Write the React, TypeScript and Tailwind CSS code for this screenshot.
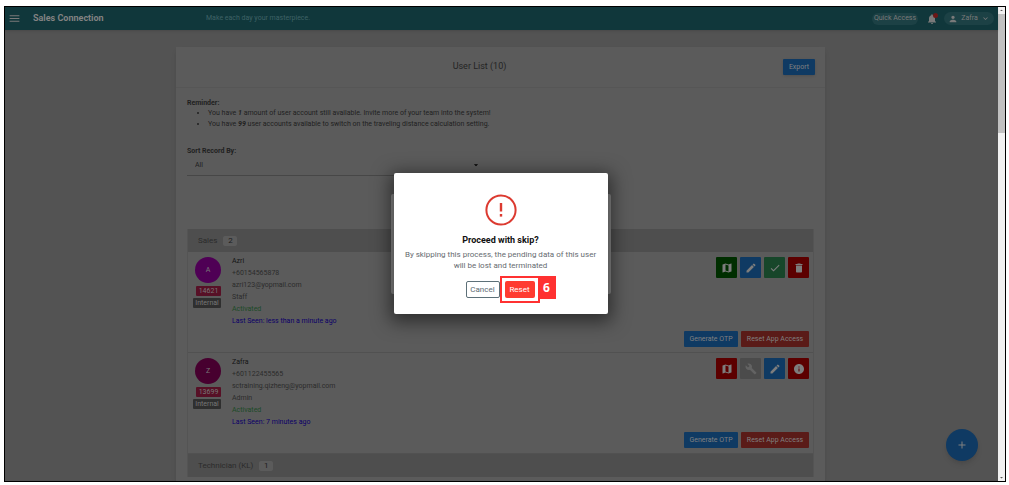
import type { ReactNode } from "react";
import {
  MdAdd,
  MdArrowDropDown,
  MdArrowDropUp,
  MdBuild,
  MdCheck,
  MdDelete,
  MdEdit,
  MdInfo,
  MdKeyboardArrowDown,
  MdMap,
  MdMenu,
  MdNotifications,
  MdPerson,
} from "react-icons/md";

type Action = { label: string; icon: ReactNode; tone: string };

type User = {
  initial: string;
  avatar: string;
  id: string;
  name: string;
  phone: string;
  email: string;
  role: string;
  lastSeen: string;
  actions: Action[];
};

const azri: User = {
  initial: "A",
  avatar: "bg-[#4f0055]",
  id: "14621",
  name: "Azri",
  phone: "+60154565878",
  email: "azri123@yopmail.com",
  role: "Staff",
  lastSeen: "Last Seen: less than a minute ago",
  actions: [
    { label: "Map", icon: <MdMap />, tone: "bg-[#002e00] text-[#7d7d7d]" },
    { label: "Edit", icon: <MdEdit />, tone: "bg-[#0f3a63] text-[#7d7d7d]" },
    { label: "Approve", icon: <MdCheck />, tone: "bg-[#17462a] text-[#7d7d7d]" },
    { label: "Delete", icon: <MdDelete />, tone: "bg-[#5c0000] text-[#7d7d7d]" },
  ],
};

const zafra: User = {
  initial: "Z",
  avatar: "bg-[#47002f]",
  id: "13699",
  name: "Zafra",
  phone: "+601122455565",
  email: "sctraining.qizheng@yopmail.com",
  role: "Admin",
  lastSeen: "Last Seen: 7 minutes ago",
  actions: [
    { label: "Map", icon: <MdMap />, tone: "bg-[#5c0000] text-[#7d7d7d]" },
    { label: "Tools", icon: <MdBuild />, tone: "bg-[#4b4b4b] text-[#636363]" },
    { label: "Edit", icon: <MdEdit />, tone: "bg-[#0f3a63] text-[#7d7d7d]" },
    { label: "Info", icon: <MdInfo />, tone: "bg-[#5c0000] text-[#7d7d7d]" },
  ],
};

function GroupHeading({ title, count }: { title: string; count: number }) {
  return (
    <h2 className="flex h-[23px] items-center gap-1.5 bg-[#4e4e4e] px-2.5 text-[8px] text-[#2b2b2b]">
      {title}
      <span className="flex h-[10px] w-[14px] items-center justify-center rounded-xs bg-[#5b5b5b] text-[#1c1c1c]">
        {count}
      </span>
    </h2>
  );
}

function UserRow({ user }: { user: User }) {
  return (
    <article className="flex h-[101px] justify-between border-b border-[#515151] py-[5px] pl-[5px] pr-1">
      <div className="flex gap-[11px]">
        <div className="flex w-7 flex-col items-end text-[7px] leading-none text-[#777]">
          <span
            className={`mb-[3px] flex size-[26px] items-center justify-center rounded-full ${user.avatar}`}
          >
            {user.initial}
          </span>
          <span className="mb-[2px] flex h-[10px] w-[25px] items-center justify-center rounded-[1px] bg-[#571026]">
            {user.id}
          </span>
          <span className="flex h-[10px] w-7 items-center justify-center rounded-[1px] bg-[#2f2f2f]">
            Internal
          </span>
        </div>
        <div className="-mt-0.5 text-[7px] leading-3 text-[#2b2b2b]">
          <h3 className="text-[#141414]">{user.name}</h3>
          <p>{user.phone}</p>
          <p>{user.email}</p>
          <p>{user.role}</p>
          <p className="text-[#1c4a27]">Activated</p>
          <p className="text-[#0c0068]">{user.lastSeen}</p>
        </div>
      </div>
      <div className="flex flex-col items-end justify-between">
        <div className="flex gap-[3px]">
          {user.actions.map((action) => (
            <button
              key={action.label}
              aria-label={action.label}
              className={`flex size-[21px] items-center justify-center rounded-[1px] text-xs ${action.tone}`}
            >
              {action.icon}
            </button>
          ))}
        </div>
        <div className="flex gap-[3px] text-[7px] leading-none text-[#808080]">
          <button className="h-4 w-[54px] whitespace-nowrap rounded-[1px] bg-[#0f3a63]">
            Generate OTP
          </button>
          <button className="h-4 w-[68px] whitespace-nowrap rounded-[1px] bg-[#5a1b18]">
            Reset App Access
          </button>
        </div>
      </div>
    </article>
  );
}

function TopBar() {
  return (
    <header className="flex h-[23px] shrink-0 items-center bg-[#10373b] pl-[3px] pr-1 text-[#7a7a7a] shadow-sm">
      <button aria-label="Open menu" className="mr-3 text-[13px]">
        <MdMenu />
      </button>
      <span className="w-[173px] text-[9px] font-bold text-[#828282]">Sales Connection</span>
      <span className="text-[7px] text-[#3f6266]">Make each day your masterpiece.</span>
      <div className="ml-auto flex items-center text-[7px] leading-none">
        <button className="h-3 w-[46px] whitespace-nowrap rounded-full bg-[#1c4145]">
          Quick Access
        </button>
        <button aria-label="Notifications" className="relative ml-2 text-xs">
          <MdNotifications />
          <span className="absolute right-0 top-0 size-[5px] rounded-full bg-[#6b1717]" />
        </button>
        <button className="ml-1.5 flex h-[13px] w-[50px] items-center justify-between rounded-full bg-[#1c4145] px-1">
          <MdPerson className="text-[10px]" />
          Zafra
          <MdKeyboardArrowDown className="text-[9px]" />
        </button>
      </div>
    </header>
  );
}

function UserList() {
  return (
    <section className="ml-[171px] mr-[173px] mt-[17px] min-h-0 flex-1 overflow-hidden bg-[#5b5b5b] shadow-md">
      <div className="flex h-[41px] items-center border-b border-[#565656] pr-2.5">
        <h1 className="flex-1 text-center text-[9px] text-[#242424]">User List (10)</h1>
        <button className="h-4 w-8 rounded-[1px] bg-[#0f3a63] text-[7px] leading-none text-[#808080] shadow">
          Export
        </button>
      </div>
      <div className="px-[11px] pt-2.5 text-[7px] text-[#1f1f1f]">
        <p className="font-bold leading-[10px]">Reminder:</p>
        <ul className="list-disc pl-[21px] leading-[11px]">
          <li>
            You have <b className="italic">1</b> amount of user account still available. Invite more of
            your team into the system!
          </li>
          <li>
            You have <b className="italic">99</b> user accounts available to switch on the traveling
            distance calculation setting.
          </li>
        </ul>
        <label htmlFor="sort" className="mt-4 block font-bold leading-[10px]">
          Sort Record By:
        </label>
        <div className="relative w-[302px]">
          <select
            id="sort"
            className="block h-5 w-full appearance-none border-b border-[#474747] pl-2 text-[7px]"
          >
            <option>All</option>
          </select>
          <MdArrowDropDown className="pointer-events-none absolute right-2 top-1 text-[10px] text-black" />
        </div>
        <div className="mt-[53px] border-x border-[#545454]">
          <GroupHeading title="Sales" count={2} />
          <UserRow user={azri} />
          <UserRow user={zafra} />
          <GroupHeading title="Technician (KL)" count={1} />
        </div>
      </div>
    </section>
  );
}

function SkipDialog() {
  return (
    <div className="absolute inset-0 flex items-center justify-center pb-px pr-0.5">
      <div className="absolute h-[100px] w-[220px] rounded-xs bg-[#8c8c8c]" />
      <div
        role="dialog"
        aria-labelledby="skip-title"
        className="relative flex w-[214px] flex-col items-center rounded-xs bg-white px-2 pb-[11px] pt-[21px] shadow-[0_4px_18px_4px_rgba(0,0,0,0.5)]"
      >
        <svg viewBox="0 0 32 32" className="size-8" fill="none" stroke="#dc3a30" aria-hidden="true">
          <circle cx="16" cy="16" r="14.6" strokeWidth="2" />
          <path d="M16 9v8.5" strokeWidth="2.4" />
          <path d="M16 20v2.6" strokeWidth="2.4" />
        </svg>
        <h2 id="skip-title" className="mt-2 text-[9px] font-bold leading-3 text-[#111]">
          Proceed with skip?
        </h2>
        <p className="mt-[3px] text-center text-[8px] leading-[11px] text-[#666b70]">
          By skipping this process, the pending data of this user
          <br />
          will be lost and terminated
        </p>
        <div className="ml-1 mt-[5px] flex items-center">
          <button className="h-[17px] w-[34px] rounded-xs border border-[#5d7078] text-[8px] leading-none text-[#5d6a73]">
            Cancel
          </button>
          <div className="relative border-2 border-[#ff3131] p-[3px]">
            <button className="block h-[17px] w-[30px] rounded-xs bg-[#ff3b30] text-[8px] leading-none text-white">
              Reset
            </button>
            <span className="absolute -top-0.5 left-full flex h-[23px] w-[18px] items-center justify-center bg-[#ff3131] font-['Open_Sans',sans-serif] text-xs font-bold text-white">
              6
            </span>
          </div>
        </div>
      </div>
    </div>
  );
}

function Scrollbar() {
  return (
    <div className="flex w-[7px] shrink-0 flex-col bg-[#f1f1f1] text-[7px] text-[#555]" aria-hidden="true">
      <MdArrowDropUp />
      <div className="h-1/4 bg-[#c1c1c1]" />
      <MdArrowDropDown className="mt-auto" />
    </div>
  );
}

export default function App() {
  return (
    <div className="h-screen bg-white pb-[3px] pl-1 pr-[3px] pt-1.5 font-[Roboto,sans-serif]">
      <div className="flex h-full overflow-hidden border border-black">
        <main className="relative flex min-w-0 flex-1 flex-col bg-[#535353]">
          <TopBar />
          <UserList />
          <button
            aria-label="Add user"
            className="absolute bottom-5 right-5 flex size-8 items-center justify-center rounded-full bg-[#0f3a63] text-xs text-[#808080] shadow-md"
          >
            <MdAdd />
          </button>
          <SkipDialog />
        </main>
        <Scrollbar />
      </div>
    </div>
  );
}
